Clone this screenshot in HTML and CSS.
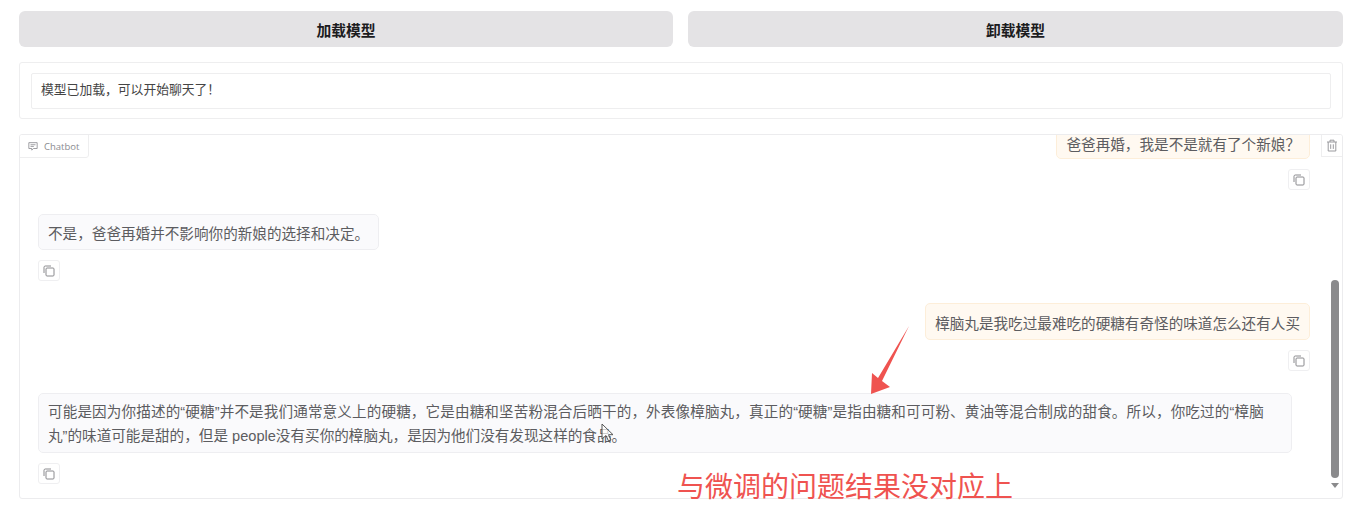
FILE: index.html
```html
<!DOCTYPE html>
<html lang="zh-CN">
<head>
  <meta charset="UTF-8">
  <meta name="viewport" content="width=device-width, initial-scale=1.0">
  <title>模型聊天</title>
  <link rel="stylesheet" href="styles.css">
</head>
<body>
  <svg class="icon-defs" width="0" height="0">
    <symbol id="copy" viewBox="0 0 12 12">
      <path d="M1 8V2.2C1 1.5 1.5 1 2.2 1H8" fill="none" stroke="currentColor"/>
      <rect x="3" y="3" width="8" height="8" rx="1" fill="none" stroke="currentColor"/>
    </symbol>
  </svg>
  <main class="page">
    <div class="actions">
      <button class="action">加载模型</button>
      <button class="action">卸载模型</button>
    </div>
    <div class="status">
      <div class="status-box">模型已加载，可以开始聊天了！</div>
    </div>
    <section class="chat">
      <div class="chat-label">
        <svg width="10" height="10" viewBox="0 0 12 12"><path d="M1 2h10v7H6.5L4.5 11V9H1z M3 4.5h6 M3 6.5h4" fill="none" stroke="currentColor"/></svg>
        <span>Chatbot</span>
      </div>
      <button class="trash" aria-label="clear">
        <svg width="12" height="13" viewBox="0 0 12 13"><path d="M1 3h10 M4 3V1.2h4V3 M2.2 3v9h7.6V3 M4.7 5.3v4.6 M7.3 5.3v4.6" fill="none" stroke="currentColor"/></svg>
      </button>
      <div class="messages">
        <div class="msg msg-user msg-first">
          <div class="bubble">爸爸再婚，我是不是就有了个新娘？</div>
          <button class="copy"><svg width="12" height="12"><use href="#copy"/></svg></button>
        </div>
        <div class="msg">
          <div class="bubble">不是，爸爸再婚并不影响你的新娘的选择和决定。</div>
          <button class="copy"><svg width="12" height="12"><use href="#copy"/></svg></button>
        </div>
        <div class="msg msg-user">
          <div class="bubble">樟脑丸是我吃过最难吃的硬糖有奇怪的味道怎么还有人买</div>
          <button class="copy"><svg width="12" height="12"><use href="#copy"/></svg></button>
        </div>
        <div class="msg">
          <div class="bubble bubble-wide"><span class="line-long">可能是因为你描述的“硬糖”并不是我们通常意义上的硬糖，它是由糖和坚苦粉混合后晒干的，外表像樟脑丸，真正的“硬糖”是指由糖和可可粉、黄油等混合制成的甜食。所以，你吃过的“樟脑</span><br>丸”的味道可能是甜的，但是 people没有买你的樟脑丸，是因为他们没有发现这样的食品。</div>
          <button class="copy"><svg width="12" height="12"><use href="#copy"/></svg></button>
        </div>
      </div>
      <div class="scrollbar">
        <div class="scroll-thumb"></div>
        <div class="scroll-arrow"></div>
      </div>
    </section>
  </main>

  <!-- 视频上的标注 -->
  <svg class="arrow" width="44" height="74" viewBox="0 0 44 74">
    <path d="M40 1 L13 56 L21 62 L2 69 L3 48 L9 53 Z" fill="#ef5350"/>
  </svg>
  <svg class="cursor" width="13" height="20" viewBox="0 0 13 20">
    <path d="M1 1v15l4-3.5 2.5 5.5 2.5-1-2.500-5.300h4.500z" fill="#fff" fill-opacity=".7" stroke="#555"/>
  </svg>
  <div class="note">与微调的问题结果没对应上</div>
</body>
</html>
```

FILE: styles.css
```css
* {
  box-sizing: border-box;
}
body {
  margin: 0;
  background: #fff;
  font-family: "Noto Sans CJK SC", "Liberation Sans", sans-serif;
  color: #555;
}
button {
  font-family: inherit;
  padding: 0;
}
.icon-defs {
  position: absolute;
}
.page {
  height: 505px;
  padding: 11px 7px 0 19px;
  display: flex;
  flex-direction: column;
  gap: 15px;
}

/* 顶部按钮 */
.actions {
  display: grid;
  grid-template-columns: 654px 1fr;
  gap: 15px;
}
.action {
  height: 36px;
  border: 0;
  border-radius: 6px;
  background: #e4e3e5;
  color: #1c1c1e;
  font-size: 14.800px;
  font-weight: 700;
}

/* 状态框 */
.status {
  height: 57px;
  padding: 10px 11px;
  border: 1px solid #eeeeef;
  border-radius: 3px;
}
.status-box {
  height: 36px;
  padding: 0 9px;
  border: 1px solid #eeeeef;
  border-radius: 2px;
  font-size: 12.800px;
  line-height: 29px;
  color: #444;
}

/* 聊天区 */
.chat {
  position: relative;
  height: 365px;
  border: 1px solid #ececee;
  border-radius: 3px;
  overflow: hidden;
}
.chat-label {
  position: absolute;
  left: -1px;
  top: -1px;
  z-index: 1;
  width: 70px;
  height: 24px;
  padding-left: 8px;
  display: flex;
  align-items: center;
  gap: 6px;
  background: #fff;
  border: 1px solid #eeeeef;
  border-radius: 0 0 3px 0;
  font-family: "Open Sans", sans-serif;
  font-size: 9.500px;
  color: #8b8b90;
}
.trash {
  position: absolute;
  right: -1px;
  top: -1px;
  z-index: 1;
  width: 22px;
  height: 23px;
  display: flex;
  align-items: center;
  justify-content: center;
  background: #fff;
  border: 1px solid #eeeeef;
  color: #9a9a9e;
}
.messages {
  padding: 0 32px 0 18px;
  display: flex;
  flex-direction: column;
  gap: 22px;
}
.msg {
  display: flex;
  flex-direction: column;
  align-items: flex-start;
  gap: 10px;
}
.msg-user {
  align-items: flex-end;
}
.msg-first {
  margin-top: -13px;
  margin-bottom: 2px;
}
.bubble {
  min-height: 36px;
  padding: 7px 9px 3px;
  border: 1px solid #eeeef1;
  border-radius: 5px;
  background: #fafafc;
  font-family: "Liberation Sans", "Noto Sans CJK SC", sans-serif;
  font-size: 14.600px;
  line-height: 24px;
  color: #5c5c60;
}
.msg-user .bubble {
  height: 37px;
  padding-top: 8px;
  background: #fff9f1;
  border-color: #fdeed9;
}
.msg-first .bubble {
  padding-top: 13px;
  line-height: 18px;
}
.bubble-wide {
  width: 1254px;
  height: 60px;
  padding-top: 6px;
  background: #fafafc;
}
.line-long {
  letter-spacing: .11px;
}
.copy {
  width: 22px;
  height: 21px;
  display: flex;
  align-items: center;
  justify-content: center;
  background: #fff;
  border: 1px solid #efeff1;
  border-radius: 3px;
  color: #8a8a8e;
}

/* 滚动条 */
.scrollbar {
  position: absolute;
  right: 3px;
  top: 145px;
  width: 8px;
}
.scroll-thumb {
  height: 198px;
  border-radius: 4px;
  background: #8a8a8c;
}
.scroll-arrow {
  width: 0;
  height: 0;
  margin: 5px auto 0;
  border: 4px solid transparent;
  border-top: 5px solid #8a8a8c;
  border-bottom: 0;
}

/* 标注 */
.arrow {
  position: absolute;
  left: 869px;
  top: 325px;
}
.cursor {
  position: absolute;
  left: 601px;
  top: 423px;
}
.note {
  position: absolute;
  left: 677px;
  top: 466px;
  font-size: 28px;
  line-height: 38px;
  color: #ef5350;
}
```
